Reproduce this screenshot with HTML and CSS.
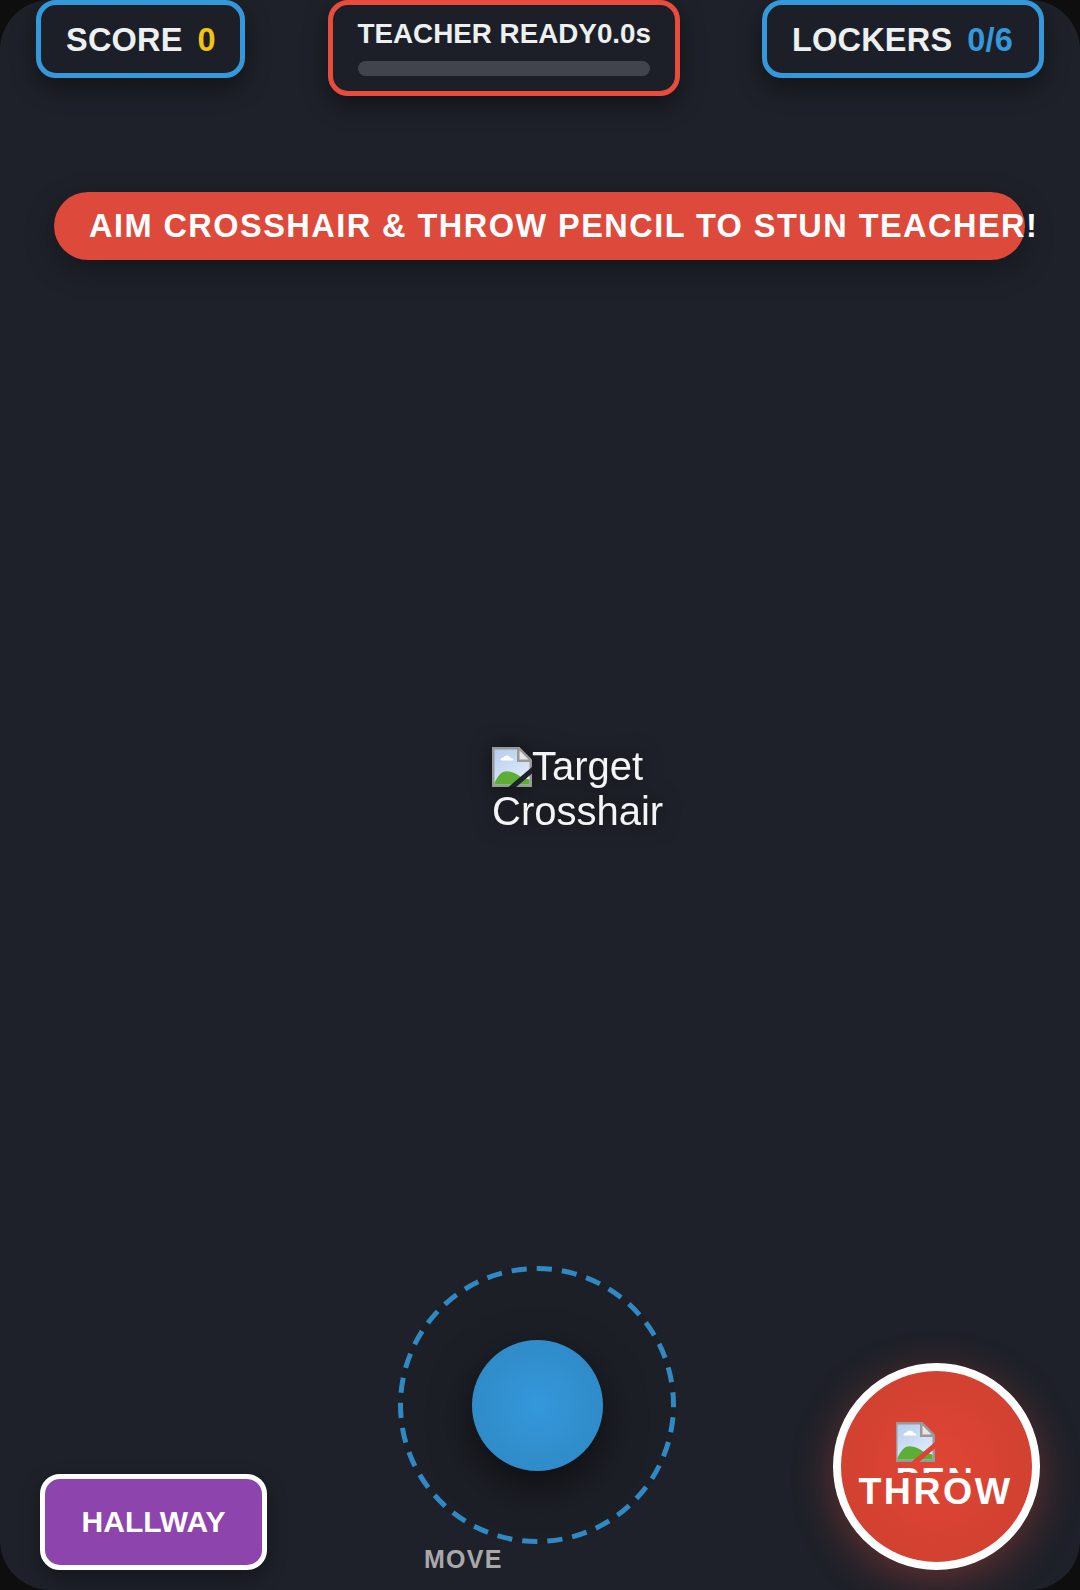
FILE: index.html
```html
<!DOCTYPE html>
<html lang="en">
<head>
<meta charset="UTF-8" />
<meta name="viewport" content="width=device-width, initial-scale=1" />
<title>Locker Dash</title>
<link rel="stylesheet" href="styles.css">
</head>
<body>

<svg class="defs" width="0" height="0" aria-hidden="true">
  <defs>
    <linearGradient id="skyFill" x1="0" y1="0" x2="0.6" y2="1">
      <stop offset="0" stop-color="#b5cdee" />
      <stop offset="1" stop-color="#e0ebf9" />
    </linearGradient>
    <!-- placeholder picture: page with folded corner, torn by a diagonal slash -->
    <symbol id="missingPic" viewBox="0 0 16 16">
      <path d="M0 0H11L16 5V16H0Z" fill="#999" />
      <path d="M1 1H10V6H15V15H1Z" fill="url(#skyFill)" />
      <path d="M11 1.4L14.6 5H11Z" fill="#e6e6e6" />
      <path d="M3.4 5.2C3.4 4.4 4.2 4.2 4.6 4.3C5 3 7.2 3.1 7.4 4.4C8.3 4.4 8.6 4.9 8.5 5.4H3.6Z" fill="#fff" />
      <path d="M1 15V14.4C2.2 11.6 3.8 9.7 5.8 9.7C8 9.7 10 10.8 11.8 12.2L15 13V15Z" fill="#5cae37" />
      <path d="M7.2 16.8L16.8 8.6" class="slash" />
    </symbol>
  </defs>
</svg>

<div class="game">
  <div class="hud">
    <div class="stat stat-score">SCORE <span class="val-score">0</span></div>
    <div class="teacher">
      <div class="teacher-row"><span>TEACHER READY</span><span>0.0s</span></div>
      <div class="cooldown"></div>
    </div>
    <div class="stat stat-lockers">LOCKERS <span class="val-lockers">0/6</span></div>
  </div>

  <div class="banner">AIM CROSSHAIR &amp; THROW PENCIL TO STUN TEACHER!</div>

  <div class="stage">
    <div class="crosshair">
      <svg class="pic pic-dark"><use href="#missingPic" /></svg>Target Crosshair
    </div>
  </div>

  <div class="controls">
    <button class="hallway">HALLWAY</button>
    <div class="joystick">
      <svg class="ring" viewBox="0 0 278 278">
        <circle cx="139" cy="139" r="136.5" />
      </svg>
      <div class="knob"></div>
      <div class="move-label">MOVE</div>
    </div>
    <button class="throw">
      <div class="pen">
        <svg class="pic pic-red"><use href="#missingPic" /></svg>
        <div class="pen-alt">PEN</div>
      </div>
      <div class="throw-label">THROW</div>
    </button>
  </div>
</div>

</body>
</html>
```

FILE: styles.css
```css
* { box-sizing: border-box; }
html, body { margin: 0; height: 100%; background: #0e0e0e; }
body { font-family: "Liberation Sans", Arial, sans-serif; color: #ecf0f1; }
.defs { position: absolute; }

.game { display: flex; flex-direction: column; width: 1080px; height: 1590px; border-radius: 50px; background: #1e2129; overflow: hidden; }

/* top row */
.hud { display: flex; justify-content: space-between; align-items: flex-start; padding: 0 36px; }
.stat { display: flex; align-items: center; gap: 15px; height: 78px; padding: 2px 25px 0; font-size: 32.5px; font-weight: bold; letter-spacing: .2px; background: #1c1f27; border: 5px solid #3498db; border-radius: 20px; box-shadow: 0 10px 25px rgba(0,0,0,.4); }
.stat-score { width: 209px; }
.stat-lockers { width: 282px; }
.val-score { color: #f1c40f; }
.val-lockers { color: #3498db; }
.teacher { width: 352px; height: 96px; padding: 13px 25px 0; background: #1c1f27; border: 5px solid #e74c3c; border-radius: 20px; box-shadow: 0 10px 25px rgba(0,0,0,.4); }
.teacher-row { display: flex; justify-content: space-between; font-size: 27.8px; font-weight: bold; line-height: 32px; white-space: nowrap; }
.cooldown { height: 15px; margin-top: 11px; border-radius: 8px; background: #41444c; }

.banner { width: 971px; height: 68px; margin: 96px 0 0 54px; padding-left: 35px; border-radius: 34px; background: #dd493b; color: #fff; font-size: 32.5px; font-weight: bold; letter-spacing: 1.46px; line-height: 68px; white-space: nowrap; box-shadow: 0 10px 30px rgba(0,0,0,.3); }

/* play area */
.stage { flex: 1; position: relative; }
.crosshair { position: absolute; left: 492px; top: 484px; width: 175px; font-size: 40px; color: #f2f4f5; filter: drop-shadow(0 0 10px rgba(0,0,0,.5)); }
.pic { display: inline-block; width: 40px; height: 40px; }
.pic-dark { color: #1e2129; vertical-align: -7px; }
.pic-red { display: block; margin-left: -1px; color: #dc4335; }
.slash { fill: none; stroke: currentColor; stroke-width: 2; }

/* bottom row */
.controls { display: flex; align-items: flex-end; padding: 0 0 20px 40px; }
button { font-family: inherit; color: #fff; font-weight: bold; cursor: pointer; }
.hallway { width: 227px; height: 96px; padding: 0; background: #8e44ad; border: 5px solid #fff; border-radius: 20px; font-size: 30px; box-shadow: 0 8px 20px rgba(0,0,0,.3); }

.joystick { position: relative; display: flex; align-items: center; justify-content: center; width: 278px; height: 278px; margin: 0 0 26px 131px; border-radius: 50%; background: rgba(0,0,0,.05); }
.ring { position: absolute; inset: 0; }
.ring circle { fill: none; stroke: #3189c4; stroke-width: 5; stroke-dasharray: 15.2 10.02; stroke-dashoffset: 13; }
.knob { width: 131px; height: 131px; border-radius: 50%; background: radial-gradient(circle, #3498db, #2e86c1); box-shadow: 0 15px 40px rgba(0,0,0,.55); }
.move-label { position: absolute; left: 26px; top: 279px; font-size: 25px; font-weight: bold; letter-spacing: 1.25px; color: #a9a9a9; }

.throw { display: flex; flex-direction: column; align-items: center; justify-content: flex-start; width: 207px; height: 207px; margin-left: 157px; padding: 51px 2px 0 0; background: radial-gradient(circle, #e04535, #cc3f2f); border: 8px solid #fff; border-radius: 50%; box-shadow: 0 10px 40px rgba(231,76,60,.35); letter-spacing: 2.5px; font-size: 37.5px; }
.pen { width: 80px; height: 51px; overflow: hidden; text-align: center; }
.pen-alt { font-size: 35px; line-height: 35px; white-space: nowrap; }
.throw-label { margin-top: -2px; line-height: 40px; }
```
